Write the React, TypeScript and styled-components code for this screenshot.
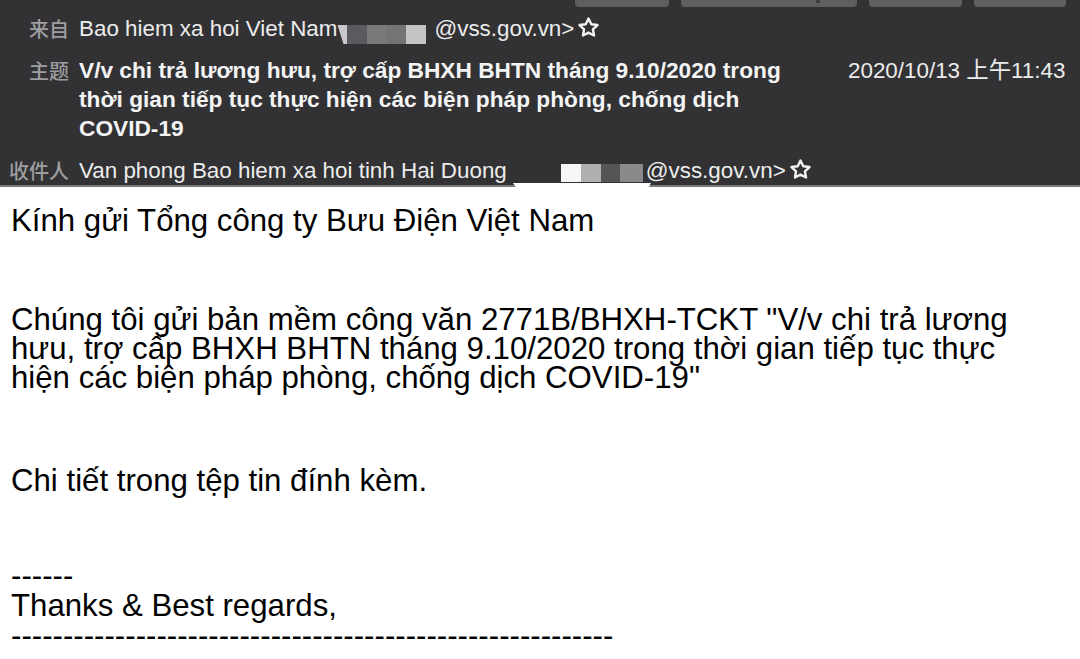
import React from "react";
import styled, { createGlobalStyle } from "styled-components";

const GlobalStyle = createGlobalStyle`
  html, body {
    margin: 0;
    padding: 0;
    background: #ffffff;
  }
  body {
    width: 1080px;
    height: 659px;
    overflow: hidden;
    font-family: "Liberation Sans", Arial, "Noto Sans CJK SC", sans-serif;
  }
`;

const HeaderBlock = styled.header`
  background: #323234;
  border-bottom: 2px solid #7b7b7d;
  height: 187px;
  box-sizing: border-box;
  font-size: 22.4px;
  line-height: 29px;
  color: #ececec;
`;

const Toolbar = styled.div`
  display: flex;
  justify-content: flex-end;
  gap: 12px;
  padding-right: 14px;
  height: 8px;
`;

const ToolButton = styled.div<{ $w: number }>`
  width: ${(p) => p.$w}px;
  height: 7px;
  background: #5f5f61;
  border-radius: 0 0 4px 4px;
  position: relative;
`;

const Tick = styled.span`
  position: absolute;
  left: 135px;
  top: 0;
  width: 4px;
  height: 3px;
  background: #3e3e40;
`;

const Fields = styled.div`
  display: grid;
  grid-template-columns: 69px 1fr;
  column-gap: 10px;
  padding-top: 6px;
`;

const Label = styled.div<{ $mt?: number }>`
  text-align: right;
  color: #9e9ea0;
  font-family: "Noto Sans CJK SC", "Liberation Sans", sans-serif;
  font-size: 20px;
  font-weight: 500;
  margin-top: ${(p) => p.$mt ?? 0}px;
`;

const Value = styled.div<{ $mt?: number }>`
  display: flex;
  align-items: flex-start;
  margin-top: ${(p) => p.$mt ?? 0}px;
  position: relative;
  white-space: nowrap;
`;

const Subject = styled.div`
  font-weight: 700;
  font-size: 22.7px;
  color: #f4f4f4;
  width: 769px;
`;

const DateText = styled.div`
  font-family: "Liberation Sans", "Noto Sans CJK SC", sans-serif;
  color: #ececec;
`;

const Redacted = styled.span<{ $top: number; $mr: number; $ml: number }>`
  display: inline-flex;
  margin-top: ${(p) => p.$top}px;
  margin-left: ${(p) => p.$ml}px;
  margin-right: ${(p) => p.$mr}px;
`;

const Pixel = styled.span<{ $c: string; $w: number; $h: number; $clip?: boolean }>`
  width: ${(p) => p.$w}px;
  height: ${(p) => p.$h}px;
  background: ${(p) => p.$c};
  clip-path: ${(p) => (p.$clip ? "polygon(0 0, 100% 0, 100% 100%, 60% 100%)" : "none")};
`;

const StarIcon = styled.svg`
  width: 23px;
  height: 23px;
  margin-left: 3px;
  margin-top: 2px;
`;

const WhiteNotch = styled.span`
  position: absolute;
  left: 434px;
  top: 27px;
  width: 138px;
  height: 8px;
  background: #ffffff;
  clip-path: polygon(0 0, 100% 0, 97% 100%, 4% 100%);
`;

const Letter = styled.main`
  padding: 19px 11px 0;
  font-size: 31.2px;
  line-height: 29px;
  color: #000000;
  font-family: "Liberation Sans", Arial, sans-serif;
`;

const Para = styled.p<{ $mt: number; $lh?: number }>`
  margin: ${(p) => p.$mt}px 0 0;
  line-height: ${(p) => p.$lh ?? 29}px;
  white-space: nowrap;
`;

const Star = () => (
  <StarIcon viewBox="0 0 24 24" fill="none" stroke="#f2f2f2" strokeWidth={2.5} strokeLinejoin="round">
    <path d="M12 2.6l2.9 6 6.5.8-4.8 4.5 1.2 6.5L12 17.3l-5.8 3.1 1.2-6.5-4.8-4.5 6.5-.8z" />
  </StarIcon>
);

const fromPixels = [
  { c: "#c9c9cb", w: 10, clip: true },
  { c: "#5b5b5f", w: 20 },
  { c: "#79797b", w: 20 },
  { c: "#747476", w: 19 },
  { c: "#c4c4c6", w: 20 },
];

const toPixels = [
  { c: "#f6f6f8", w: 20 },
  { c: "#b0b0b2", w: 20 },
  { c: "#555557", w: 19 },
  { c: "#8a8a8c", w: 23 },
];

export default function App() {
  return (
    <>
      <GlobalStyle />
      <HeaderBlock>
        <Toolbar>
          <ToolButton $w={94} />
          <ToolButton $w={176}>
            <Tick />
          </ToolButton>
          <ToolButton $w={93} />
          <ToolButton $w={92} />
        </Toolbar>
        <Fields>
          <Label>来自</Label>
          <Value>
            Bao hiem xa hoi Viet Nam
            <Redacted $top={11} $ml={0} $mr={8}>
              {fromPixels.map((p, i) => (
                <Pixel key={i} $c={p.c} $w={p.w} $h={19} $clip={p.clip} />
              ))}
            </Redacted>
            @vss.gov.vn&gt;
            <Star />
          </Value>

          <Label $mt={12}>主题</Label>
          <Value $mt={12}>
            <Subject>
              V/v chi trả lương hưu, trợ cấp BHXH BHTN tháng 9.10/2020 trong
              <br />
              thời gian tiếp tục thực hiện các biện pháp phòng, chống dịch
              <br />
              COVID-19
            </Subject>
            <DateText>2020/10/13 上午11:43</DateText>
          </Value>

          <Label $mt={13}>收件人</Label>
          <Value $mt={13}>
            Van phong Bao hiem xa hoi tinh Hai Duong
            <Redacted $top={8} $ml={54} $mr={3}>
              {toPixels.map((p, i) => (
                <Pixel key={i} $c={p.c} $w={p.w} $h={18} />
              ))}
            </Redacted>
            @vss.gov.vn&gt;
            <Star />
            <WhiteNotch />
          </Value>
        </Fields>
      </HeaderBlock>

      <Letter>
        <Para $mt={0}>Kính gửi Tổng công ty Bưu Điện Việt Nam</Para>
        <Para $mt={70}>
          Chúng tôi gửi bản mềm công văn 2771B/BHXH-TCKT "V/v chi trả lương
          <br />
          hưu, trợ cấp BHXH BHTN tháng 9.10/2020 trong thời gian tiếp tục thực
          <br />
          hiện các biện pháp phòng, chống dịch COVID-19"
        </Para>
        <Para $mt={74}>Chi tiết trong tệp tin đính kèm.</Para>
        <Para $mt={66} $lh={30}>
          ------
          <br />
          Thanks &amp; Best regards,
          <br />
          ----------------------------------------------------------
        </Para>
      </Letter>
    </>
  );
}
